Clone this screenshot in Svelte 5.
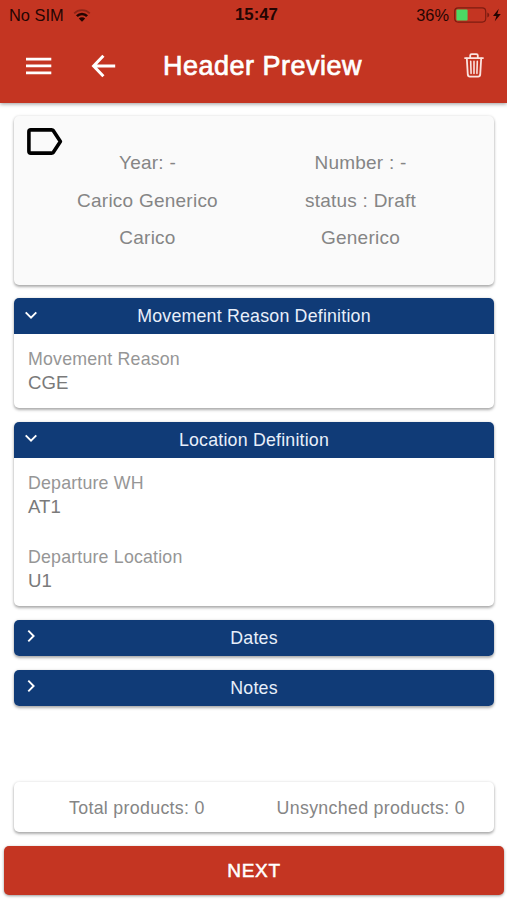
<script lang="ts">
	type Field = { label: string; value: string };
	type Section = { title: string; open: boolean; fields: Field[] };

	const summary = [
		['Year: -', 'Number : -'],
		['Carico Generico', 'status : Draft'],
		['Carico', 'Generico']
	];

	let sections: Section[] = $state([
		{
			title: 'Movement Reason Definition',
			open: true,
			fields: [{ label: 'Movement Reason', value: 'CGE' }]
		},
		{
			title: 'Location Definition',
			open: true,
			fields: [
				{ label: 'Departure WH', value: 'AT1' },
				{ label: 'Departure Location', value: 'U1' }
			]
		},
		{ title: 'Dates', open: false, fields: [] },
		{ title: 'Notes', open: false, fields: [] }
	]);
</script>

<div class="page">
	<header>
		<div class="status-bar">
			<div class="carrier">
				<span>No SIM</span>
				<svg width="18" height="13" viewBox="0 0 18 13" fill="none" stroke="#240502">
					<path d="M1.2 4.4a11 11 0 0 1 15.6 0" stroke-width="1.6" opacity="0.35" />
					<path d="M3.9 7.1a7.2 7.2 0 0 1 10.2 0" stroke-width="2.6" />
					<path d="M9 12.8 5.8 9.6a4.5 4.5 0 0 1 6.4 0z" fill="#240502" stroke="none" />
				</svg>
			</div>
			<span class="time">15:47</span>
			<div class="power">
				<span>36%</span>
				<svg width="48" height="16" viewBox="0 0 48 16">
					<rect x="0.7" y="0.9" width="31" height="14.2" rx="3.5" fill="none" stroke="#7d1c11" stroke-width="1.2" />
					<rect x="2.4" y="2.6" width="11.2" height="10.8" rx="1" fill="#4cd964" />
					<path d="M33.3 5.6q2 .6 2 2.4t-2 2.4z" fill="#7d1c11" />
					<path d="M44.8 1.8 39 9h3.4l-1.6 5.2L46.8 7h-3.5z" fill="#240502" />
				</svg>
			</div>
		</div>
		<div class="toolbar">
			<button class="icon-btn" aria-label="Menu">
				<svg width="26" height="18" viewBox="0 0 26 18" fill="#fff">
					<path d="M0 .7h25.3v2.7H0zM0 7.6h25.3v2.7H0zM0 14.5h25.3v2.7H0z" />
				</svg>
			</button>
			<button class="icon-btn back" aria-label="Back">
				<svg width="25" height="24" viewBox="0 0 25 24" fill="none" stroke="#fff" stroke-width="3">
					<path d="M12.4 1.8 2.6 12l9.8 10.2M2.8 12h21.4" />
				</svg>
			</button>
			<h1>Header Preview</h1>
			<button class="icon-btn trash" aria-label="Delete">
				<svg width="20" height="25" viewBox="0 0 20 25" fill="none" stroke="#fbe3df" stroke-width="1.8" stroke-linecap="round" stroke-linejoin="round">
					<path d="M1 5.1h18M6.2 4.8V2.6q0-1.4 1.4-1.4h4.8q1.4 0 1.4 1.4v2.2" />
					<path d="m2.8 5.3 1 16.4q.2 1.9 2 1.9h8.4q1.8 0 2-1.9l1-16.4" />
					<path d="M10 8.4v12M6.7 8.4l.4 12M13.3 8.4l-.4 12" stroke-width="1.6" />
				</svg>
			</button>
		</div>
	</header>

	<main>
		<div class="card summary">
			<svg class="tag" width="36" height="27" viewBox="0 0 36 27" fill="none" stroke="#000" stroke-width="3.6" stroke-linejoin="round">
				<path d="M3.8 1.9h20.7q1.3 0 2 1l6.9 10.6-6.9 10.6q-.7 1-2 1H3.8q-1.9 0-1.9-1.9V3.8q0-1.9 1.9-1.9z" />
			</svg>
			{#each summary as row}
				<div class="summary-row">
					{#each row as cell}
						<span>{cell}</span>
					{/each}
				</div>
			{/each}
		</div>

		{#each sections as section}
			<section class="card">
				<button class="section-head" onclick={() => (section.open = !section.open)}>
					<svg class="chevron" class:open={section.open} width="12" height="12" viewBox="0 0 12 12" fill="none" stroke="#fff" stroke-width="1.9">
						<path d="m3.3.7 5.3 5.3-5.3 5.3" />
					</svg>
					{section.title}
				</button>
				{#if section.open}
					<dl>
						{#each section.fields as field}
							<div class="field">
								<dt>{field.label}</dt>
								<dd>{field.value}</dd>
							</div>
						{/each}
					</dl>
				{/if}
			</section>
		{/each}
	</main>

	<footer>
		<div class="card totals">
			<span>Total products: 0</span>
			<span>Unsynched products: 0</span>
		</div>
		<button class="next">NEXT</button>
	</footer>
</div>

<style>
	:global(body) {
		background: #fff;
	}

	.page {
		display: flex;
		flex-direction: column;
		height: 900px;
		overflow: hidden;
		font-family: 'Liberation Sans', Arial, sans-serif;
	}

	button {
		border: 0;
		padding: 0;
		font: inherit;
		color: inherit;
		background: none;
	}

	svg {
		display: block;
		flex: none;
	}

	header {
		box-sizing: border-box;
		height: 103px;
		background: #c43522;
		box-shadow: 0 1px 4px rgba(0, 0, 0, 0.4);
	}

	.status-bar {
		display: grid;
		grid-template-columns: 1fr auto 1fr;
		align-items: center;
		height: 30px;
		padding: 0 5px 0 9px;
		font-size: 16.4px;
		color: #240502;
	}

	.carrier,
	.power {
		display: flex;
		align-items: center;
	}

	.carrier {
		gap: 9px;
	}

	.power {
		justify-content: flex-end;
		gap: 5px;
	}

	.time {
		padding-left: 2px;
		font-size: 16.8px;
		font-weight: 700;
		line-height: 20px;
	}

	.toolbar {
		display: flex;
		align-items: center;
		height: 72px;
		padding: 0 23px 0 26px;
	}

	.back {
		margin-left: 39px;
	}

	.trash {
		margin-top: -2px;
	}

	h1 {
		flex: 1;
		margin: 0 0 0 47px;
		font-size: 27px;
		font-weight: 400;
		letter-spacing: 0.5px;
		color: #fff;
		-webkit-text-stroke: 0.7px #fff;
	}

	main {
		flex: 1;
		display: flex;
		flex-direction: column;
		gap: 13.5px;
		padding: 12.5px 13px 0 14px;
	}

	.card {
		border-radius: 5px;
		background: #fff;
		overflow: hidden;
		box-shadow: 0 2px 3px rgba(0, 0, 0, 0.3), 0 0 3px rgba(0, 0, 0, 0.12);
	}

	.summary {
		position: relative;
		box-sizing: border-box;
		height: 169px;
		padding: 28.4px 27px 0;
		background: #fafafa;
	}

	.tag {
		position: absolute;
		top: 12px;
		left: 13px;
	}

	.summary-row {
		display: grid;
		grid-template-columns: 1fr 1fr;
		height: 37.8px;
		line-height: 38px;
		font-size: 19px;
		letter-spacing: 0.24px;
		text-align: center;
		color: #858585;
	}

	.section-head {
		position: relative;
		display: block;
		width: 100%;
		height: 36.3px;
		padding-top: 1px;
		background: #103b77;
		font-size: 17.8px;
		letter-spacing: 0.2px;
		color: #e8effa;
	}

	.chevron {
		position: absolute;
		top: 10.5px;
		left: 11px;
	}

	.chevron.open {
		transform: rotate(90deg);
	}

	dl {
		margin: 0;
		padding: 12.7px 14px 14.3px;
	}

	.field {
		height: 47px;
	}

	.field + .field {
		margin-top: 27.3px;
	}

	dt,
	dd {
		margin: 0;
		line-height: 24px;
	}

	dt {
		font-size: 17.8px;
		letter-spacing: 0.18px;
		color: #969696;
	}

	dd {
		font-size: 18.6px;
		color: #7a7a7a;
	}

	footer {
		padding: 0 3px 5px 4px;
	}

	.totals {
		display: flex;
		justify-content: space-between;
		align-items: center;
		box-sizing: border-box;
		height: 50px;
		margin: 0 10px 14px;
		padding: 2px 29px 0 55px;
		font-size: 17.8px;
		letter-spacing: 0.31px;
		color: #858585;
	}

	.next {
		display: block;
		width: 100%;
		height: 49px;
		border-radius: 5px;
		background: #c43522;
		box-shadow: 0 1px 3px rgba(0, 0, 0, 0.4);
		font-size: 19px;
		letter-spacing: 0.7px;
		color: #fff;
		-webkit-text-stroke: 0.5px #fff;
	}
</style>
